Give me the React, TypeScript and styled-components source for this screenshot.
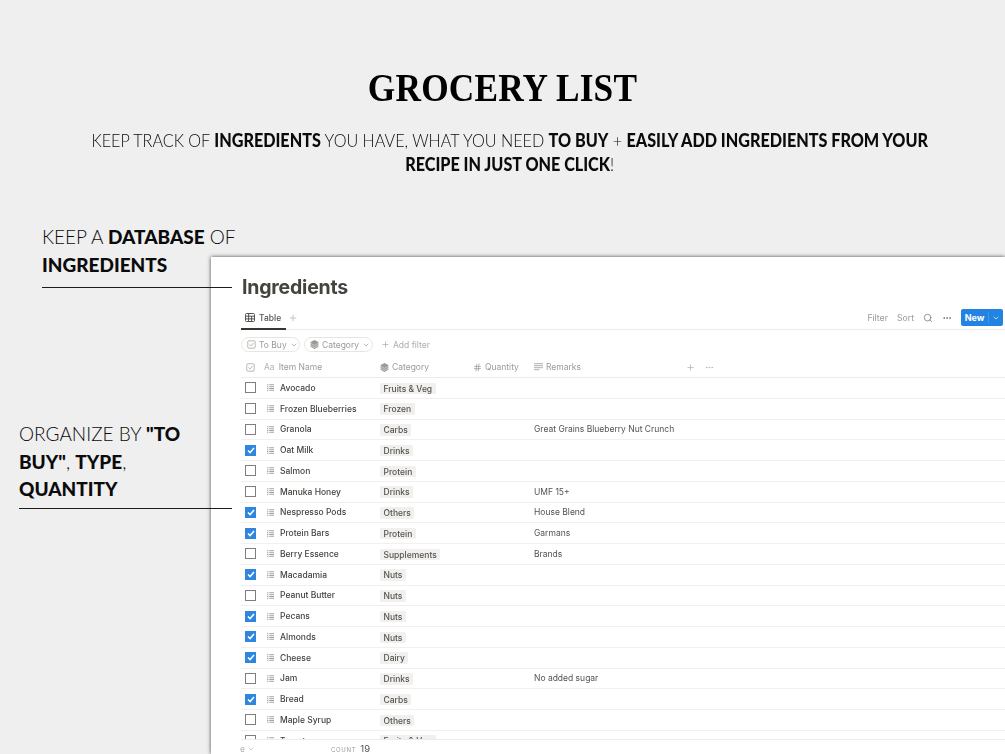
import React from 'react';
import styled, { createGlobalStyle } from 'styled-components';
import { ChevronDown, Ellipsis, Hash, Plus, Search } from 'lucide-react';

const GlobalStyle = createGlobalStyle`
  html, body {
    margin: 0;
    padding: 0;
    background: #efefef;
  }
  * {
    box-sizing: border-box;
  }
`;

const Page = styled.div`
  width: 1005px;
  height: 754px;
  overflow: hidden;
  display: flex;
  flex-direction: column;
  background: #efefef;
  color: #0b0b0b;
  font-family: 'Lato', 'Liberation Sans', sans-serif;
`;

const Header = styled.header`
  height: 223px;
  padding-top: 60px;
  text-align: center;
  flex: none;
`;

const Title = styled.h1`
  margin: 0;
  height: 56px;
  font-family: 'Liberation Serif', serif;
  font-size: 39px;
  line-height: 56px;
  font-weight: 700;
  letter-spacing: 0.2px;
  color: #000;
  transform: scaleX(0.905);
`;

const Intro = styled.p`
  margin: 12px 0 0;
  padding-left: 16px;
  font-size: 18px;
  line-height: 24px;
  font-weight: 300;
  transform: scaleX(0.898);
  strong {
    font-weight: 900;
  }
`;

const Main = styled.main`
  flex: 1;
  min-height: 0;
  display: flex;
`;

const Aside = styled.aside`
  flex: none;
  width: 211px;
  position: relative;
  z-index: 1;
`;

const Note = styled.div<{ $left: number; $top: number }>`
  margin: ${(p) => p.$top}px 0 0 ${(p) => p.$left}px;
  font-size: 19px;
  line-height: 27.5px;
  font-weight: 300;
  white-space: nowrap;
  strong {
    font-weight: 900;
  }
`;

const Rule = styled.div<{ $width: number; $gap: number }>`
  width: ${(p) => p.$width}px;
  height: 1.5px;
  margin-top: ${(p) => p.$gap}px;
  background: #1c1c1c;
`;

const Window = styled.section`
  flex: 1;
  min-width: 0;
  margin-top: 34px;
  display: flex;
  flex-direction: column;
  background: #fff;
  box-shadow: 0 0 4px rgba(0, 0, 0, 0.7);
  padding-left: 30px;
  color: #37352f;
  font-family: 'Inter', 'Liberation Sans', sans-serif;
`;

const DbTitle = styled.h2`
  margin: 0;
  height: 49px;
  padding: 18px 0 0 1px;
  font-size: 19.5px;
  line-height: 24px;
  font-weight: 700;
  letter-spacing: -0.2px;
  color: #45433e;
  filter: blur(0.3px);
`;

const TabBar = styled.div`
  height: 24px;
  flex: none;
  display: flex;
  align-items: center;
  border-bottom: 1px solid #ececeb;
  filter: blur(0.3px);
`;

const Tab = styled.div`
  height: 24px;
  width: 45px;
  display: flex;
  align-items: center;
  gap: 4px;
  padding: 2px 0 0 4px;
  font-size: 8.5px;
  font-weight: 500;
  color: #55534e;
  border-bottom: 2px solid #37352f;
`;

const Faint = styled.span`
  display: inline-flex;
  color: #a9a8a4;
`;

const TabAdd = styled(Faint)`
  margin-left: 2px;
`;

const Tools = styled.div`
  margin-left: auto;
  padding-right: 2px;
  display: flex;
  align-items: center;
  font-size: 8.7px;
  color: #9b9a97;
`;

const ToolLabel = styled.span`
  margin-right: 9px;
`;

const ToolIcon = styled.span`
  display: inline-flex;
  color: #77756f;
  margin-right: 9px;
`;

const NewButton = styled.div`
  width: 42px;
  height: 17px;
  display: flex;
  align-items: center;
  background: #2383e2;
  border-radius: 2px;
  color: #fff;
  font-size: 9px;
  font-weight: 700;
`;

const NewLabel = styled.span`
  width: 28px;
  text-align: center;
  border-right: 1px solid rgba(255, 255, 255, 0.15);
`;

const NewArrow = styled.span`
  flex: 1;
  display: flex;
  justify-content: center;
`;

const FilterBar = styled.div`
  height: 29px;
  flex: none;
  display: flex;
  align-items: center;
  gap: 4px;
  color: #9b9a97;
  font-size: 8.5px;
  white-space: nowrap;
  filter: blur(0.3px);
`;

const Pill = styled.div<{ $width: number }>`
  width: ${(p) => p.$width}px;
  height: 15px;
  display: flex;
  align-items: center;
  gap: 3px;
  padding-left: 5px;
  border: 1px solid #e6e5e3;
  border-radius: 8px;
`;

const AddFilter = styled.div`
  margin-left: 4px;
  display: flex;
  align-items: center;
  gap: 3px;
  color: #aeadaa;
`;

const Grid = styled.div`
  display: grid;
  grid-template-columns: 139px 93px 61px 1fr;
  align-items: center;
`;

const HeadRow = styled(Grid)`
  height: 19px;
  flex: none;
  padding-bottom: 2px;
  border-bottom: 1px solid #ececeb;
  color: #9b9a97;
  font-size: 8.5px;
  filter: blur(0.3px);
`;

const HeadCell = styled.div`
  display: flex;
  align-items: center;
  gap: 3px;
`;

const NameHead = styled(HeadCell)`
  padding-left: 5px;
`;

const AaMark = styled.span`
  margin-left: 6px;
  margin-right: 1px;
  color: #b3b2af;
`;

const HeadActions = styled.div`
  display: inline-flex;
  align-items: center;
  gap: 10px;
  margin-left: 102px;
  color: #b3b2af;
`;

const Body = styled.div`
  flex: 1;
  min-height: 0;
  overflow: hidden;
  filter: blur(0.3px);
`;

const Row = styled(Grid)`
  height: 20.75px;
  border-bottom: 1px solid #f0f0ef;
  font-size: 8.5px;
`;

const NameCell = styled.div`
  display: flex;
  align-items: center;
  padding-left: 4px;
  font-weight: 500;
  color: #45433e;
`;

const Check = styled.span<{ $on: boolean }>`
  width: 11px;
  height: 11px;
  flex: none;
  display: flex;
  align-items: center;
  justify-content: center;
  border: ${(p) => (p.$on ? 'none' : '1.5px solid #7f7e7b')};
  background: ${(p) => (p.$on ? '#2e86e0' : '#fff')};
`;

const ListMark = styled.span`
  display: inline-flex;
  margin: 0 6px 0 11px;
  color: #a3a29f;
`;

const Tag = styled.span`
  display: inline-block;
  height: 11.5px;
  margin-top: 1px;
  padding: 0 3.5px;
  line-height: 12px;
  background: #f1f0ee;
  border-radius: 1.5px;
  color: #55534e;
  font-weight: 500;
`;

const Remark = styled.div`
  grid-column: 4;
  color: #55534e;
`;

const Footer = styled.footer`
  height: 15px;
  flex: none;
  display: flex;
  align-items: center;
  padding-top: 3px;
  border-top: 1px solid #ececeb;
  font-size: 8.5px;
  color: #b3b2af;
  filter: blur(0.3px);
`;

const Clipped = styled.div`
  width: 15px;
  margin-left: -1px;
  display: flex;
  justify-content: flex-end;
  align-items: center;
  gap: 2px;
  overflow: hidden;
  white-space: nowrap;
  svg {
    flex: none;
  }
`;

const Count = styled.div`
  margin-left: 76px;
  display: flex;
  align-items: baseline;
  gap: 4px;
  font-size: 6px;
  letter-spacing: 0.7px;
  color: #9b9a97;
`;

const CountValue = styled.span`
  font-size: 9.5px;
  letter-spacing: 0;
  color: #55534e;
`;

const TableIcon = () => (
  <svg width="10" height="9" viewBox="0 0 10 9" fill="none" stroke="#55534e" strokeWidth="1">
    <rect x="0.5" y="0.5" width="9" height="8" rx="1" />
    <path d="M0.5 3.2h9M0.5 5.9h9M3.6 0.5v8M6.6 3.2v5.3" />
  </svg>
);

const CheckHeadIcon = () => (
  <svg width="9" height="9" viewBox="0 0 10 10" fill="none" stroke="#a9a8a4" strokeWidth="0.9">
    <rect x="0.9" y="0.9" width="8.2" height="8.2" rx="1" />
    <path d="M2.8 5l1.6 1.6 2.9-3.3" />
  </svg>
);

const CubeIcon = () => (
  <svg width="9" height="9" viewBox="0 0 10 10" fill="#9b9a97">
    <path d="M5 0l4.3 2.3v5.3L5 10 .7 7.6V2.3z" />
    <path d="M.7 3.6L5 6l4.3-2.4M.7 5.8L5 8.2l4.3-2.4" fill="none" stroke="#fff" strokeWidth="0.5" />
  </svg>
);

const LinesIcon = () => (
  <svg width="9" height="8" viewBox="0 0 9 8" stroke="#a9a8a4" strokeWidth="0.9">
    <path d="M0 .7h9M0 2.7h9M0 4.7h9M0 6.7h5.5" />
  </svg>
);

const ListIcon = () => (
  <svg width="7" height="7" viewBox="0 0 7 7" stroke="currentColor" strokeWidth="1.1">
    <path d="M0 .8h1.4M2.3 .8H7M0 2.7h1.4M2.3 2.7H7M0 4.5h1.4M2.3 4.5H7M0 6.3h1.4M2.3 6.3H7" />
  </svg>
);

const CheckMark = () => (
  <svg width="8" height="7" viewBox="0 0 8 7" fill="none" stroke="#fff" strokeWidth="1.5">
    <path d="M1 3.4l2.1 2.2L7 1" />
  </svg>
);

type Item = { name: string; category: string; done?: boolean; remark?: string };

const items: Item[] = [
  { name: 'Avocado', category: 'Fruits & Veg' },
  { name: 'Frozen Blueberries', category: 'Frozen' },
  { name: 'Granola', category: 'Carbs', remark: 'Great Grains Blueberry Nut Crunch' },
  { name: 'Oat Milk', category: 'Drinks', done: true },
  { name: 'Salmon', category: 'Protein' },
  { name: 'Manuka Honey', category: 'Drinks', remark: 'UMF 15+' },
  { name: 'Nespresso Pods', category: 'Others', done: true, remark: 'House Blend' },
  { name: 'Protein Bars', category: 'Protein', done: true, remark: 'Garmans' },
  { name: 'Berry Essence', category: 'Supplements', remark: 'Brands' },
  { name: 'Macadamia', category: 'Nuts', done: true },
  { name: 'Peanut Butter', category: 'Nuts' },
  { name: 'Pecans', category: 'Nuts', done: true },
  { name: 'Almonds', category: 'Nuts', done: true },
  { name: 'Cheese', category: 'Dairy', done: true },
  { name: 'Jam', category: 'Drinks', remark: 'No added sugar' },
  { name: 'Bread', category: 'Carbs', done: true },
  { name: 'Maple Syrup', category: 'Others' },
  { name: 'Tomato', category: 'Fruits & Veg' },
];

export default function App() {
  return (
    <Page>
      <GlobalStyle />
      <Header>
        <Title>GROCERY LIST</Title>
        <Intro>
          KEEP TRACK OF <strong>INGREDIENTS</strong> YOU HAVE, WHAT YOU NEED <strong>TO BUY</strong> +{' '}
          <strong>EASILY ADD INGREDIENTS FROM YOUR</strong>
          <br />
          <strong>RECIPE IN JUST ONE CLICK</strong>!
        </Intro>
      </Header>
      <Main>
        <Aside>
          <Note $left={42} $top={0}>
            KEEP A <strong>DATABASE</strong> OF
            <br />
            <strong>INGREDIENTS</strong>
            <Rule $width={190} $gap={8.5} />
          </Note>
          <Note $left={19} $top={132}>
            ORGANIZE BY <strong>"TO</strong>
            <br />
            <strong>BUY"</strong>, <strong>TYPE</strong>,
            <br />
            <strong>QUANTITY</strong>
            <Rule $width={213} $gap={5} />
          </Note>
        </Aside>
        <Window>
          <DbTitle>Ingredients</DbTitle>
          <TabBar>
            <Tab>
              <TableIcon />
              Table
            </Tab>
            <TabAdd>
              <Plus size={10} strokeWidth={1.5} />
            </TabAdd>
            <Tools>
              <ToolLabel>Filter</ToolLabel>
              <ToolLabel>Sort</ToolLabel>
              <ToolIcon>
                <Search size={10} strokeWidth={1.8} />
              </ToolIcon>
              <ToolIcon>
                <Ellipsis size={10} strokeWidth={2.2} />
              </ToolIcon>
              <NewButton>
                <NewLabel>New</NewLabel>
                <NewArrow>
                  <ChevronDown size={8} strokeWidth={2} />
                </NewArrow>
              </NewButton>
            </Tools>
          </TabBar>
          <FilterBar>
            <Pill $width={59}>
              <CheckHeadIcon />
              To Buy
              <ChevronDown size={8} />
            </Pill>
            <Pill $width={69}>
              <CubeIcon />
              Category
              <ChevronDown size={8} />
            </Pill>
            <AddFilter>
              <Plus size={9} />
              Add filter
            </AddFilter>
          </FilterBar>
          <HeadRow>
            <NameHead>
              <CheckHeadIcon />
              <AaMark>Aa</AaMark>
              Item Name
            </NameHead>
            <HeadCell>
              <CubeIcon />
              Category
            </HeadCell>
            <HeadCell>
              <Hash size={9} />
              Quantity
            </HeadCell>
            <HeadCell>
              <LinesIcon />
              Remarks
              <HeadActions>
                <Plus size={9} />
                <Ellipsis size={9} />
              </HeadActions>
            </HeadCell>
          </HeadRow>
          <Body>
            {items.map((item) => (
              <Row key={item.name}>
                <NameCell>
                  <Check $on={!!item.done}>{item.done && <CheckMark />}</Check>
                  <ListMark>
                    <ListIcon />
                  </ListMark>
                  {item.name}
                </NameCell>
                <div>
                  <Tag>{item.category}</Tag>
                </div>
                {item.remark && <Remark>{item.remark}</Remark>}
              </Row>
            ))}
          </Body>
          <Footer>
            <Clipped>
              Calculate <ChevronDown size={8} />
            </Clipped>
            <Count>
              COUNT <CountValue>19</CountValue>
            </Count>
          </Footer>
        </Window>
      </Main>
    </Page>
  );
}
